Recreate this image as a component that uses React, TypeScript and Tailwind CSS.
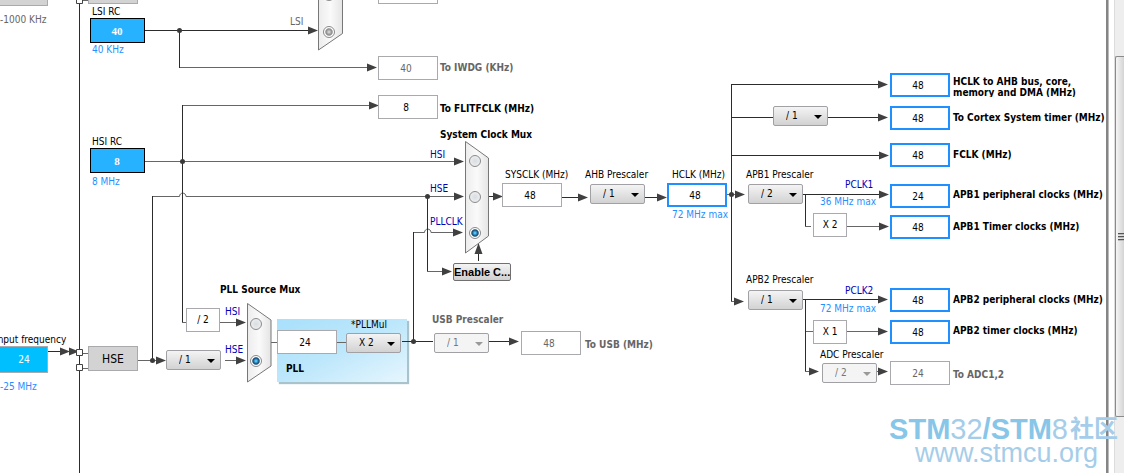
import React from 'react';
import clsx from 'clsx';

const tones = {
  normal: 'text-black',
  muted: 'text-[#666]',
  link: 'text-[#1e90ff]',
  signal: 'text-[#0000b4]',
};

type Tone = keyof typeof tones;

interface Caption {
  x: number;
  y: number;
  text: string;
  tone?: Tone;
  bold?: boolean;
  htmlFor?: string;
}

const captions: Caption[] = [
  { x: 0, y: 20, text: '-1000 KHz', tone: 'muted' },
  { x: 92, y: 12, text: 'LSI RC', htmlFor: 'lsi' },
  { x: 92, y: 50, text: '40 KHz', tone: 'link' },
  { x: 92, y: 142, text: 'HSI RC', htmlFor: 'hsi' },
  { x: 92, y: 182, text: '8 MHz', tone: 'link' },
  { x: -5, y: 340, text: 'Input frequency', htmlFor: 'input-freq' },
  { x: 0, y: 387, text: '-25 MHz', tone: 'link' },
  { x: 290, y: 22, text: 'LSI', tone: 'muted', htmlFor: 'rtc-lsi' },
  { x: 440, y: 68, text: 'To IWDG (KHz)', tone: 'muted', bold: true, htmlFor: 'iwdg' },
  { x: 440, y: 109, text: 'To FLITFCLK (MHz)', bold: true, htmlFor: 'flitf' },
  { x: 440, y: 135, text: 'System Clock Mux', bold: true },
  { x: 430, y: 155, text: 'HSI', tone: 'signal', htmlFor: 'sys-hsi' },
  { x: 430, y: 189, text: 'HSE', tone: 'signal', htmlFor: 'sys-hse' },
  { x: 430, y: 222, text: 'PLLCLK', tone: 'signal', htmlFor: 'sys-pll' },
  { x: 505, y: 175, text: 'SYSCLK (MHz)', htmlFor: 'sysclk' },
  { x: 585, y: 175, text: 'AHB Prescaler', htmlFor: 'ahb' },
  { x: 672, y: 175, text: 'HCLK (MHz)', htmlFor: 'hclk' },
  { x: 672, y: 215, text: '72 MHz max', tone: 'link' },
  { x: 746, y: 175, text: 'APB1 Prescaler', htmlFor: 'apb1' },
  { x: 845, y: 185, text: 'PCLK1', tone: 'signal' },
  { x: 820, y: 202, text: '36 MHz max', tone: 'link' },
  { x: 746, y: 280, text: 'APB2 Prescaler', htmlFor: 'apb2' },
  { x: 845, y: 291, text: 'PCLK2', tone: 'signal' },
  { x: 820, y: 309, text: '72 MHz max', tone: 'link' },
  { x: 820, y: 355, text: 'ADC Prescaler', htmlFor: 'adc' },
  { x: 220, y: 290, text: 'PLL Source Mux', bold: true },
  { x: 225, y: 312, text: 'HSI', tone: 'signal', htmlFor: 'pll-hsi' },
  { x: 225, y: 350, text: 'HSE', tone: 'signal', htmlFor: 'pll-hse' },
  { x: 351, y: 325, text: '*PLLMul', htmlFor: 'pllmul' },
  { x: 286, y: 369, text: 'PLL', bold: true, htmlFor: 'pll' },
  { x: 432, y: 320, text: 'USB Prescaler', tone: 'muted', bold: true, htmlFor: 'usb-div' },
  { x: 585, y: 345, text: 'To USB (MHz)', tone: 'muted', bold: true, htmlFor: 'usb' },
  { x: 953, y: 118, text: 'To Cortex System timer (MHz)', bold: true, htmlFor: 'cortex' },
  { x: 953, y: 155, text: 'FCLK (MHz)', bold: true, htmlFor: 'fclk' },
  { x: 953, y: 195, text: 'APB1 peripheral clocks (MHz)', bold: true, htmlFor: 'pclk1' },
  { x: 953, y: 227, text: 'APB1 Timer clocks (MHz)', bold: true, htmlFor: 'tim1' },
  { x: 953, y: 300, text: 'APB2 peripheral clocks (MHz)', bold: true, htmlFor: 'pclk2' },
  { x: 953, y: 331, text: 'APB2 timer clocks (MHz)', bold: true, htmlFor: 'tim2' },
  { x: 953, y: 375, text: 'To ADC1,2', tone: 'muted', bold: true, htmlFor: 'adc12' },
];

const fieldStyles = {
  plain: 'w-[60px] h-6 border border-[#a9a9ae] bg-white text-black pr-1',
  muted: 'w-[60px] h-6 border border-[#a9a9ae] bg-white text-[#666] pr-1',
  active: 'w-[60px] h-6 border-2 border-[#1e90ff] bg-white text-black pr-1',
  source: "w-[55px] h-[25px] border border-black bg-[#26b2ff] font-['Liberation_Serif'] text-[11px] font-bold text-white pr-px",
  input: 'w-[60px] h-[27px] border border-[#a9a9ae] bg-[#00bfff] text-white pl-3',
};

interface Field {
  id: string;
  x: number;
  y: number;
  value: number | string;
  kind: keyof typeof fieldStyles;
}

const fields: Field[] = [
  { id: 'lsi', x: 90, y: 18, value: 40, kind: 'source' },
  { id: 'hsi', x: 90, y: 148, value: 8, kind: 'source' },
  { id: 'input-freq', x: -12, y: 346, value: 24, kind: 'input' },
  { id: 'rtc', x: 378, y: -20, value: '', kind: 'muted' },
  { id: 'iwdg', x: 378, y: 56, value: 40, kind: 'muted' },
  { id: 'flitf', x: 378, y: 95, value: 8, kind: 'plain' },
  { id: 'sysclk', x: 502, y: 183, value: 48, kind: 'plain' },
  { id: 'hclk', x: 667, y: 183, value: 48, kind: 'active' },
  { id: 'pll', x: 277, y: 330, value: 24, kind: 'plain' },
  { id: 'usb', x: 521, y: 331, value: 48, kind: 'muted' },
  { id: 'ahb-bus', x: 890, y: 73, value: 48, kind: 'active' },
  { id: 'cortex', x: 890, y: 106, value: 48, kind: 'active' },
  { id: 'fclk', x: 890, y: 143, value: 48, kind: 'active' },
  { id: 'pclk1', x: 890, y: 184, value: 24, kind: 'active' },
  { id: 'tim1', x: 890, y: 215, value: 48, kind: 'active' },
  { id: 'pclk2', x: 890, y: 288, value: 48, kind: 'active' },
  { id: 'tim2', x: 890, y: 320, value: 48, kind: 'active' },
  { id: 'adc12', x: 890, y: 361, value: 24, kind: 'muted' },
];

const pickers = [
  { id: 'hse-div', x: 166, y: 350, value: '/ 1' },
  { id: 'pllmul', x: 346, y: 333, value: 'X 2' },
  { id: 'usb-div', x: 434, y: 333, value: '/ 1', disabled: true },
  { id: 'ahb', x: 590, y: 184, value: '/ 1' },
  { id: 'cortex-div', x: 773, y: 106, value: '/ 1' },
  { id: 'apb1', x: 748, y: 184, value: '/ 2' },
  { id: 'apb2', x: 748, y: 290, value: '/ 1' },
  { id: 'adc', x: 822, y: 363, value: '/ 2', disabled: true },
];

const factors = [
  { x: 186, y: 308, text: '/ 2' },
  { x: 813, y: 213, text: 'X 2' },
  { x: 813, y: 320, text: 'X 1' },
];

const radios = [
  { id: 'rtc-hse', group: 'rtc', x: 329, y: -5, disabled: true },
  { id: 'rtc-lsi', group: 'rtc', x: 329, y: 32, on: true, disabled: true },
  { id: 'sys-hsi', group: 'sys', x: 475, y: 161 },
  { id: 'sys-hse', group: 'sys', x: 475, y: 197 },
  { id: 'sys-pll', group: 'sys', x: 475, y: 233, on: true },
  { id: 'pll-hsi', group: 'pll', x: 256, y: 324 },
  { id: 'pll-hse', group: 'pll', x: 256, y: 361, on: true },
];

const darkWires = [
  'M145 30.5H308',
  'M179.5 30.5V68',
  'M79.5 0V473',
  'M182.5 105V322',
  'M152.5 196V360',
  'M427.5 196V271',
  'M413.5 341V232',
  'M402 341.5H433M489 341.5H511',
  'M731.5 84V301',
  'M731 84.5H880M731 117.5H773M828 117.5H880M731 155.5H880',
  'M803 194.5H880M805.5 194V226',
  'M803 299.5H880M805.5 299V371',
  'M562 197.5H580M645 197.5H658M489 196.5H495',
  'M48 351.5H62M478.5 261V252',
];

const lightWires = [
  'M179 67.5H369',
  'M182 105.5H371',
  'M145 161.5H455',
  'M152 196.5H179.5C179.5 192 186 192 186 196.5H455',
  'M413 232.5H424.5C424.5 228 431 228 431 232.5H455',
  'M427 271.5H443',
  'M182 322.5H186M220 322.5H237M225 360.5H237M271 342.5H277M337 342.5H346',
  'M138 360.5H158M727 194.5H736M731 301.5H735',
  'M805 226.5H811M847 226.5H880M805 331.5H813M847 331.5H880',
  'M805 371.5H810M877 371.5H880',
  'M82 353.5H88M82 368.5H88M82 0.5H88',
];

// tips of the right pointing arrow heads
const arrows = [
  [318, 30.5], [377, 67.5], [379, 105.5], [464, 161.5], [464, 196.5], [463, 232.5],
  [452, 271.5], [503, 196.5], [588, 197.5], [667, 197.5], [745, 194.5], [744, 301.5],
  [888, 84.5], [888, 117.5], [889, 155.5], [889, 194.5], [889, 226.5], [888, 299.5],
  [888, 331.5], [819, 371.5], [888, 371.5], [519, 341.5], [246, 322.5], [246, 360.5],
  [166, 360.5], [70, 351.5], [79, 351.5],
];

const dots = [
  [179.5, 30.5], [182.5, 161.5], [152.5, 360.5], [427.5, 196.5], [413.5, 341.5], [731.5, 194.5],
];

const Wires = () => (
  <svg className="absolute left-0 top-0 h-full w-full overflow-visible" fill="none" aria-hidden="true">
    <defs>
      <linearGradient id="mux" x1="0" x2="1" y1="0" y2="0">
        <stop offset="0" stopColor="#ececec" />
        <stop offset="0.5" stopColor="#fafafa" />
        <stop offset="1" stopColor="#e4e4e4" />
      </linearGradient>
    </defs>
    <path d={lightWires.join('')} stroke="#666" />
    <path d={darkWires.join('')} stroke="#2c2c2c" />
    {arrows.map(([x, y]) => (
      <path key={`${x}-${y}`} d={`M${x} ${y}l-10 -4v8z`} fill="#404040" />
    ))}
    <path d="M478.5 243l-4 11h8z" fill="#404040" />
    {dots.map(([x, y]) => (
      <circle key={`${x}-${y}`} cx={x} cy={y} r="2.5" fill="#3a3a3a" />
    ))}
    <g fill="url(#mux)" stroke="#777">
      <path d="M318.5 -20V50L342.5 33.5V-20" />
      <path d="M465.5 141.5L488.5 158V236L465.5 253Z" />
      <path d="M247.5 303.5L271 320V366L247.5 382Z" />
    </g>
    <g fill="#fff" stroke="#444">
      <path d="M76.5 -2.5h6v6h-6zM76.5 349.5h6v6h-6zM76.5 364.5h6v6h-6z" />
    </g>
  </svg>
);

const ClockTree = () => (
  <main className="relative min-w-0 flex-1">
    <div className="absolute left-[277px] top-[319px] h-[63px] w-[130px] bg-linear-to-br from-[#a8e0fb] via-[#bde7fb] to-[#e6f6fe] shadow-[2px_2px_1px_#a9c3cd]" />
    <Wires />

    {fields.map((f) => (
      <input
        key={f.id}
        id={f.id}
        aria-label={f.id}
        readOnly
        defaultValue={f.value}
        className={clsx('absolute text-center outline-none', fieldStyles[f.kind])}
        style={{ left: f.x, top: f.y }}
      />
    ))}

    {pickers.map((p) => (
      <div key={p.id} className="absolute h-5 w-[55px]" style={{ left: p.x, top: p.y }}>
        <select
          id={p.id}
          aria-label={p.id}
          disabled={p.disabled}
          className="h-full w-full appearance-none rounded-xs border border-[#a0a0a5] bg-linear-to-b from-[#f4f4f4] to-[#d2d2d2] pl-3 text-black opacity-100 disabled:from-[#f4f4f4] disabled:to-[#f4f4f4] disabled:text-[#777]"
        >
          <option>{p.value}</option>
        </select>
        <svg className="pointer-events-none absolute right-1.5 top-[9px] h-1 w-2" viewBox="0 0 8 4" aria-hidden="true">
          <path d="M0 0h8L4 4z" fill={p.disabled ? '#999' : '#000'} />
        </svg>
      </div>
    ))}

    {factors.map((f) => (
      <div
        key={`${f.x}-${f.y}`}
        className="absolute flex h-6 w-[34px] items-center justify-center border border-[#a9a9ae] bg-white"
        style={{ left: f.x, top: f.y }}
      >
        {f.text}
      </div>
    ))}

    {radios.map((r) => (
      <input
        key={r.id}
        id={r.id}
        type="radio"
        name={r.group}
        aria-label={r.id}
        defaultChecked={r.on}
        disabled={r.disabled}
        className="absolute h-3 w-3 -translate-x-1/2 -translate-y-1/2 appearance-none rounded-full border border-[#8a8a8a] bg-radial from-[#d8dde2] to-[#f4f4f4] checked:from-[#4fc3f7] checked:from-10% checked:via-[#12466e] checked:via-45% checked:to-white checked:to-60% disabled:checked:from-[#ccc] disabled:checked:via-[#888]"
        style={{ left: r.x, top: r.y }}
      />
    ))}

    <button className="absolute left-[453px] top-[263px] h-[18px] w-[58px] rounded-xs border border-[#707070] bg-linear-to-b from-[#f4f4f4] to-[#d0d0d0] font-['Liberation_Sans'] text-[11px] leading-4 font-bold whitespace-nowrap">
      Enable C...
    </button>
    <button className="absolute left-[88px] top-[346px] h-[25px] w-[50px] border border-[#a9a9ae] bg-[#d3d3d3] text-xs">
      HSE
    </button>
    <div className="absolute left-[88px] -top-5 h-6 w-[50px] border border-[#a9a9ae] bg-[#d3d3d3]" />
    <div className="absolute -left-3 -top-5 h-[26px] w-[60px] border border-[#a9a9ae] bg-[#d3d3d3]" />

    {captions.map((c) => {
      const Tag = c.htmlFor ? 'label' : 'span';
      return (
        <Tag
          key={`${c.x}-${c.y}`}
          htmlFor={c.htmlFor}
          className={clsx('absolute -translate-y-1/2 whitespace-nowrap', tones[c.tone ?? 'normal'], c.bold && 'font-bold')}
          style={{ left: c.x, top: c.y }}
        >
          {c.text}
        </Tag>
      );
    })}
    <label htmlFor="ahb-bus" className="absolute left-[953px] top-[76px] h-[21px] overflow-hidden leading-[11px] font-bold whitespace-nowrap">
      HCLK to AHB bus, core,
      <br />
      memory and DMA (MHz)
    </label>
  </main>
);

const ScrollBar = () => (
  <aside className="flex w-2.5 shrink-0 flex-col border-l border-[#ddd] bg-[#eee] pt-14">
    <div className="flex h-[361px] flex-col items-end justify-center gap-px rounded-l-xs border border-r-0 border-[#8a8a8a] bg-linear-to-r from-[#f6f6f6] to-[#d4d4d4]">
      <i className="h-0.5 w-1.5 border-b border-[#bbb] bg-[#555]" />
      <i className="h-0.5 w-1.5 border-b border-[#bbb] bg-[#555]" />
      <i className="h-0.5 w-1.5 border-b border-[#bbb] bg-[#555]" />
    </div>
  </aside>
);

const Watermark = () => (
  <div className="pointer-events-none absolute right-1.5 bottom-2 flex flex-col items-end font-['Liberation_Sans','Noto_Sans_CJK_SC',sans-serif] text-[#a5cde9]">
    <p className="flex items-center text-[29px] leading-6 whitespace-nowrap">
      <b className="text-[#87c6e8]">STM</b>
      <span>32</span>
      <b className="text-[#87c6e8]">/STM</b>
      <span>8</span>
      <b className="pl-0.5 text-2xl leading-6">社区</b>
    </p>
    <p className="pr-5 text-[27px] leading-6">www.stmcu.org</p>
  </div>
);

export default function App() {
  return (
    <div className="relative flex h-screen overflow-hidden bg-white font-['DejaVu_Sans_Condensed',sans-serif] text-[10px] leading-3">
      <ClockTree />
      <div className="mr-[5px] w-[3px] shrink-0 border-r border-[#bbb] bg-[#858585]" />
      <ScrollBar />
      <Watermark />
    </div>
  );
}
